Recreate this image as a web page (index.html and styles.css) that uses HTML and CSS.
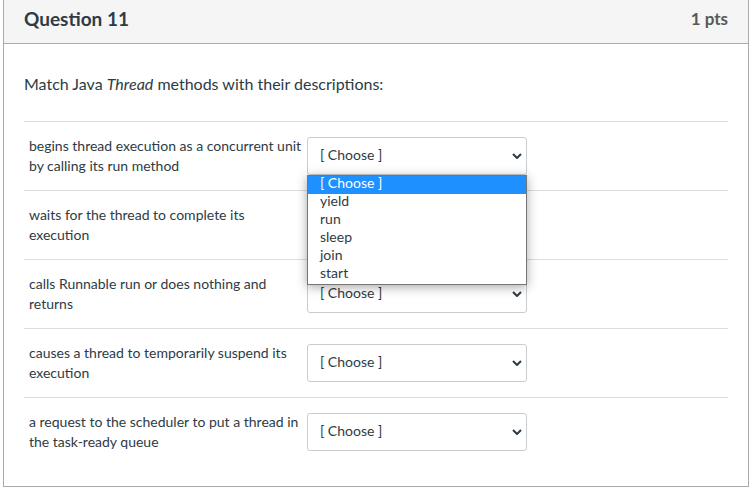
FILE: index.html
```html
<!DOCTYPE html>
<html lang="en">
<head>
    <meta charset="UTF-8">
    <meta name="viewport" content="width=device-width, initial-scale=1.0">
    <title>Question 11</title>
    <link rel="stylesheet" href="styles.css">
</head>
<body>

    <form class="question">
        <div class="question-header">
            <h2 class="question-name">Question 11</h2>
            <span class="question-points">1 pts</span>
        </div>

        <div class="question-body">
            <p class="question-text">Match Java <em>Thread</em> methods with their descriptions:</p>

            <div class="answer">
                <label for="answer1" class="answer-label">begins thread execution as a concurrent unit by calling its run method</label>
                <div class="answer-select">
                    <select id="answer1">
                        <option>[ Choose ]</option>
                        <option>yield</option>
                        <option>run</option>
                        <option>sleep</option>
                        <option>join</option>
                        <option>start</option>
                    </select>
                    <svg class="arrow" viewBox="0 0 10 6"><path d="M1 1l4 4 4-4"/></svg>
                    <ul class="menu" id="menu" role="listbox" aria-label="Answers">
                        <li class="menu-item selected" role="option" aria-selected="true">[ Choose ]</li>
                        <li class="menu-item" role="option">yield</li>
                        <li class="menu-item" role="option">run</li>
                        <li class="menu-item" role="option">sleep</li>
                        <li class="menu-item" role="option">join</li>
                        <li class="menu-item" role="option">start</li>
                    </ul>
                </div>
            </div>

            <div class="answer">
                <label for="answer2" class="answer-label">waits for the thread to complete its execution</label>
                <div class="answer-select">
                    <select id="answer2">
                        <option>[ Choose ]</option>
                        <option>yield</option>
                        <option>run</option>
                        <option>sleep</option>
                        <option>join</option>
                        <option>start</option>
                    </select>
                    <svg class="arrow" viewBox="0 0 10 6"><path d="M1 1l4 4 4-4"/></svg>
                </div>
            </div>

            <div class="answer">
                <label for="answer3" class="answer-label">calls Runnable run or does nothing and returns</label>
                <div class="answer-select">
                    <select id="answer3">
                        <option>[ Choose ]</option>
                        <option>yield</option>
                        <option>run</option>
                        <option>sleep</option>
                        <option>join</option>
                        <option>start</option>
                    </select>
                    <svg class="arrow" viewBox="0 0 10 6"><path d="M1 1l4 4 4-4"/></svg>
                </div>
            </div>

            <div class="answer">
                <label for="answer4" class="answer-label">causes a thread to temporarily suspend its execution</label>
                <div class="answer-select">
                    <select id="answer4">
                        <option>[ Choose ]</option>
                        <option>yield</option>
                        <option>run</option>
                        <option>sleep</option>
                        <option>join</option>
                        <option>start</option>
                    </select>
                    <svg class="arrow" viewBox="0 0 10 6"><path d="M1 1l4 4 4-4"/></svg>
                </div>
            </div>

            <div class="answer">
                <label for="answer5" class="answer-label">a request to the scheduler to put a thread in the task-ready queue</label>
                <div class="answer-select">
                    <select id="answer5">
                        <option>[ Choose ]</option>
                        <option>yield</option>
                        <option>run</option>
                        <option>sleep</option>
                        <option>join</option>
                        <option>start</option>
                    </select>
                    <svg class="arrow" viewBox="0 0 10 6"><path d="M1 1l4 4 4-4"/></svg>
                </div>
            </div>
        </div>
    </form>

</body>
</html>
```

FILE: styles.css
```css
* {
    box-sizing: border-box;
}

body {
    margin: 0;
    font-family: Lato, "Liberation Sans", sans-serif;
    font-size: 14px;
    line-height: 20px;
    color: #2d3b45;
    background-color: #fff;
}

.question {
    margin: 0 6px 5px 3px;
    border: 1px solid #aaa;
    border-top: none;
}

.question-header {
    display: flex;
    align-items: center;
    justify-content: space-between;
    padding: 7px 20px 12px;
    line-height: 24px;
    background-color: #f5f5f5;
    border-bottom: 1px solid #aaa;
}

.question-name {
    margin: 0;
    font-size: 19px;
    font-weight: bold;
}

.question-points {
    font-size: 17px;
    font-weight: bold;
    color: #595959;
}

.question-body {
    padding: 28px 20px 20px;
}

.question-text {
    margin: 0 0 25px;
    font-size: 16px;
    line-height: 24px;
}

.answer {
    display: flex;
    align-items: center;
    padding: 14px 5px;
    border-top: 1px solid #ddd;
}

.answer-label {
    width: 278px;
}

.answer-select {
    position: relative;
    width: 220px;
}

.answer-select select {
    display: block;
    width: 100%;
    height: 38px;
    padding: 0 12px 2px;
    font: inherit;
    color: inherit;
    background-color: #fff;
    border: 1px solid #c7cdd1;
    border-radius: 3px;
    appearance: none;
}

.arrow {
    position: absolute;
    top: 16px;
    right: 5px;
    width: 10px;
    height: 6px;
    fill: none;
    stroke: #2d3b45;
    stroke-width: 2;
    pointer-events: none;
}

/* open list of the first drop-down */
.menu {
    position: absolute;
    top: 100%;
    left: 0;
    z-index: 1;
    width: 100%;
    margin: 0;
    padding: 0;
    list-style: none;
    line-height: 14px;
    background-color: #fff;
    border: 1px solid #767676;
    box-shadow: 0 2px 10px rgba(0, 0, 0, 0.35);
}

.menu-item {
    padding: 0 12px 4px;
}

.menu-item.selected {
    color: #fff;
    background-color: #1e90ff;
}
```
